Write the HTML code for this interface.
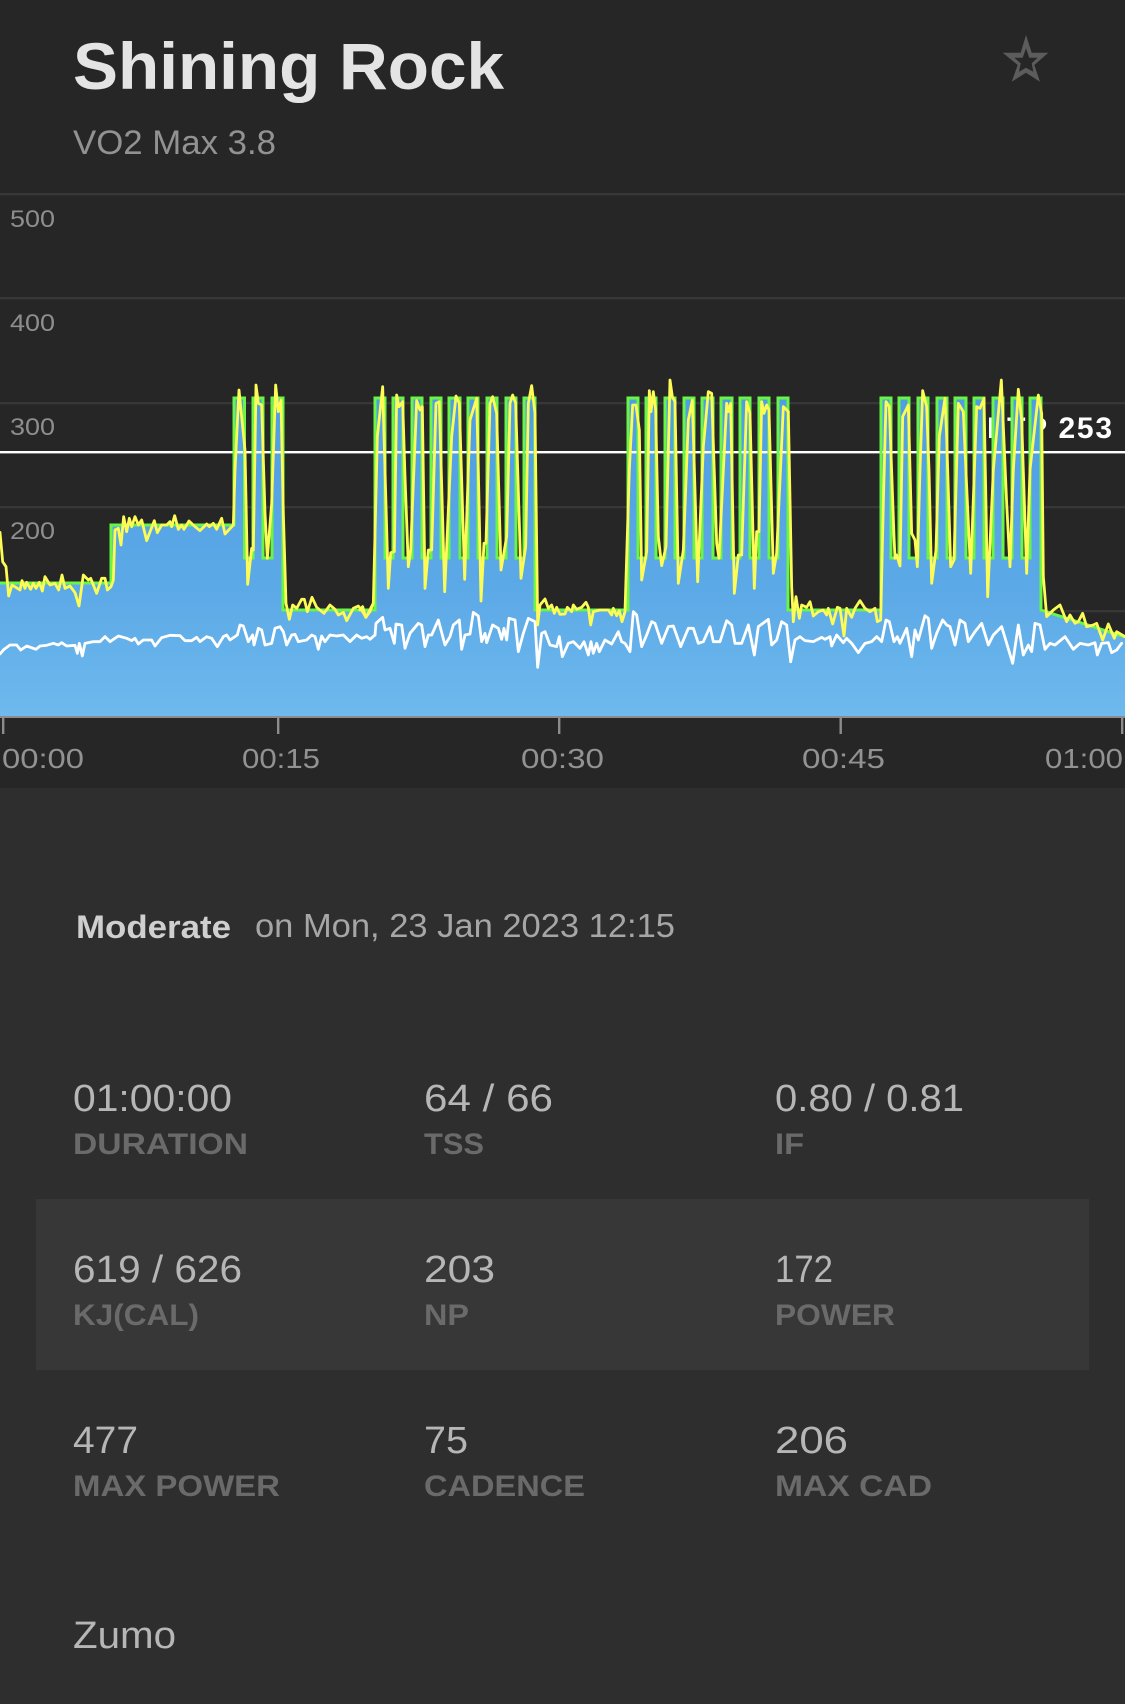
<!DOCTYPE html>
<html lang="en">
<head>
<meta charset="utf-8">
<title>Shining Rock</title>
<style>
html,body{margin:0;padding:0;background:#2e2e2e;width:1125px;height:1704px;overflow:hidden}
svg{display:block}
text{font-family:"Liberation Sans",sans-serif}
.v{font-size:38px;fill:#b6b6b6}
.l{font-size:30px;font-weight:700;fill:#6a6a6a}
.a{font-size:24px;fill:#8e8e8e}
.x{font-size:28px;fill:#929292}
</style>
</head>
<body>
<svg xmlns="http://www.w3.org/2000/svg" width="1125" height="1704" viewBox="0 0 1125 1704">
<defs>
<linearGradient id="bl" gradientUnits="userSpaceOnUse" x1="0" y1="398" x2="0" y2="717">
<stop offset="0" stop-color="#4f9ee4"/>
<stop offset="0.6" stop-color="#5ca9e7"/>
<stop offset="1" stop-color="#6eb9ed"/>
</linearGradient>
</defs>
<rect x="0" y="0" width="1125" height="1704" fill="#2e2e2e"/>
<rect x="0" y="0" width="1125" height="788" fill="#262626"/>

<text x="73" y="89" font-size="66" font-weight="700" fill="#e4e4e4" textLength="431" lengthAdjust="spacingAndGlyphs">Shining Rock</text>
<text x="73" y="154" font-size="34" fill="#929292" textLength="203" lengthAdjust="spacingAndGlyphs">VO2 Max 3.8</text>
<path fill-rule="evenodd" fill="#5c5c5c" d="M1026,35 L1031.7,52.7 L1048.3,52.7 L1034.3,65 L1040,81.7 L1026,72.7 L1011.7,81.7 L1017.7,65 L1002.7,52.7 L1020.7,52.7 Z M1026,48.3 L1029.3,57.7 L1037.7,57.7 L1031.7,63.3 L1033.3,71.7 L1026,67.7 L1019,71.7 L1020.7,63.3 L1014.3,57.7 L1022.7,57.7 Z"/>

<g fill="#373737">
<rect x="0" y="193" width="1125" height="2.4"/>
<rect x="0" y="297" width="1125" height="2.4"/>
<rect x="0" y="402" width="1125" height="2.4"/>
<rect x="0" y="506" width="1125" height="2.4"/>
<rect x="0" y="610" width="1125" height="2.4"/>
</g>
<text class="a" x="10" y="227" textLength="45" lengthAdjust="spacingAndGlyphs">500</text>
<text class="a" x="10" y="331" textLength="45" lengthAdjust="spacingAndGlyphs">400</text>
<text class="a" x="10" y="435" textLength="45" lengthAdjust="spacingAndGlyphs">300</text>
<text class="a" x="10" y="539" textLength="45" lengthAdjust="spacingAndGlyphs">200</text>

<text x="987" y="438" font-size="30" font-weight="700" fill="#ffffff" textLength="125" lengthAdjust="spacing">FTP 253</text>

<path fill="url(#bl)" d="M0,583 H111 V525 H234 V398 H244.5 V558 H253 V398 H263 V558 H272 V398 H283 V610 H375 V398 H385 V558 H393 V398 H403 V558 H412 V398 H422 V558 H431 V398 H441 V558 H449 V398 H460 V558 H468 V398 H478 V558 H487 V398 H497 V558 H506 V398 H516 V558 H524 V398 H535 V610 H628 V398 H638 V558 H646 V398 H656 V558 H665 V398 H675 V558 H684 V398 H694 V558 H702 V398 H713 V558 H721 V398 H732 V558 H740 V398 H750 V558 H759 V398 H769 V558 H778 V398 H788 V610 H881 V398 H891 V558 H899 V398 H909 V558 H918 V398 H928 V558 H937 V398 H947 V558 H955 V398 H966 V558 H974 V398 H984 V558 H993 V398 H1003 V558 H1012 V398 H1022 V558 H1030 V398 H1041 V610 L1125,637 V717 H0 Z"/>

<rect x="0" y="451" width="1125" height="2.4" fill="#ffffff"/>

<path fill="none" stroke="#69f545" stroke-width="3" stroke-linejoin="miter" d="M0,583 H111 V525 H234 V398 H244.5 V558 H253 V398 H263 V558 H272 V398 H283 V610 H375 V398 H385 V558 H393 V398 H403 V558 H412 V398 H422 V558 H431 V398 H441 V558 H449 V398 H460 V558 H468 V398 H478 V558 H487 V398 H497 V558 H506 V398 H516 V558 H524 V398 H535 V610 H628 V398 H638 V558 H646 V398 H656 V558 H665 V398 H675 V558 H684 V398 H694 V558 H702 V398 H713 V558 H721 V398 H732 V558 H740 V398 H750 V558 H759 V398 H769 V558 H778 V398 H788 V610 H881 V398 H891 V558 H899 V398 H909 V558 H918 V398 H928 V558 H937 V398 H947 V558 H955 V398 H966 V558 H974 V398 H984 V558 H993 V398 H1003 V558 H1012 V398 H1022 V558 H1030 V398 H1041 V610 L1125,637"/>

<!-- white cadence line -->
<g fill="none" stroke="#ffffff" stroke-width="8.4" stroke-linejoin="round" stroke-linecap="round">
<path transform="translate(0,370) scale(.33333)" d="M0,852 12,838 30,825 50,825 62,840 80,828 108,838 120,828 140,826 160,820 175,825 185,818 200,828 225,826 232,850 238,820 247,858 255,820 280,815 300,815 315,800 330,815 355,798 380,805 395,812 405,805 415,822 430,810 455,810 465,828 485,803 510,796 540,797 555,812 575,812 590,802 600,815 620,800 635,805 652,830 670,800 680,795 690,810 712,795 720,765 730,768 745,815 758,795 762,825 775,775 785,780 795,825 815,820 825,775 840,770 850,785 860,825 875,795 885,793 895,815 920,810 935,795 945,800 955,838 965,798 975,815 990,795 1010,798 1030,795 1050,815 1070,795 1085,805 1100,800 1110,808 1125,795"/>
<path transform="translate(360,370) scale(.33333)" d="M45,795 48,760 68,742 75,780 90,775 103,820 108,762 125,765 135,835 150,790 175,760 185,765 195,830 205,795 215,795 235,750 255,825 270,800 280,765 298,750 305,838 315,795 330,792 340,727 355,738 365,815 375,790 380,818 398,765 415,775 425,808 432,775 440,810 447,745 465,750 475,845 490,790 505,745 525,755 533,892 545,790 555,785 570,825 590,830 598,800 607,860 625,820 640,815 660,835 672,815 685,855 693,815 700,850 710,820 718,845 735,810 755,822 775,785 785,815 795,820 810,845 820,725 830,735 845,830 860,795 875,755 885,760 905,820 925,770 940,768 962,830 985,775 1000,775 1015,820 1030,815 1050,770 1060,815 1080,815 1100,752 1115,765 1125,820 1145,820 1165,765 1183,855 1195,770 1225,748 1235,825 1250,810 1265,755 1280,765 1292,875"/>
<path transform="translate(780,370) scale(.33333)" d="M32,875 45,810 60,800 75,812 100,815 125,802 135,808 150,800 155,828 170,795 190,818 200,805 215,820 235,848 255,820 275,815 290,800 305,815 318,750 328,755 342,815 352,800 360,820 380,775 395,860 405,780 415,810 435,737 445,745 455,835 470,790 488,750 500,765 510,770 525,825 540,750 555,760 565,815 585,785 605,760 625,825 640,795 665,770 680,820 698,880 715,765 730,855 745,825 755,845 765,760 780,765 795,838 810,820 825,825 855,800 880,838 900,820 925,825 945,818 952,855 965,820 985,818 995,848 1010,840 1025,820"/>
</g>

<!-- yellow power line -->
<g fill="none" stroke="#fdfb56" stroke-width="8.4" stroke-linejoin="round" stroke-linecap="round">
<path transform="translate(0,370) scale(.33333)" d="M0,487 8,575 18,590 26,678 36,645 60,660 66,632 75,655 80,637 92,658 100,640 108,655 118,637 127,663 135,620 150,645 165,640 176,660 186,615 195,655 210,648 225,668 237,708 250,615 265,630 272,625 290,670 305,625 315,625 322,660 333,650 340,630 345,480 355,475 363,525 371,440 380,485 388,445 395,470 405,440 415,465 425,450 440,512 463,452 472,488 485,465 500,465 510,455 515,470 524,437 535,478 545,465 552,478 567,453 585,470 600,482 620,462 628,470 640,460 650,478 665,445 675,492 700,465 705,300 717,60 735,240 743,643 755,535 760,540 768,45 775,100 785,105 795,430 802,565 815,400 827,45 835,125 843,90 850,430 858,700 868,748 878,705 890,715 905,688 913,688 922,725 936,682 950,712 972,730 990,705 1005,718 1015,735 1030,727 1040,752 1060,715 1075,708 1085,720 1098,742 1120,700"/>
<path transform="translate(360,370) scale(.33333)" d="M0,720 8,710 17,742 30,725 40,700 52,200 68,50 85,655 92,548 103,545 110,75 117,110 128,95 135,320 145,590 152,540 170,92 180,120 187,110 195,655 205,540 215,540 228,100 238,95 254,665 275,200 288,78 298,100 314,628 330,150 350,85 355,300 363,693 372,520 378,520 390,100 398,80 410,130 423,600 440,500 450,100 458,75 467,100 483,625 497,530 505,100 515,47 525,130 533,765 540,705 555,687 565,715 575,705 583,730 590,712 600,733 615,732 622,712 635,725 640,705 650,718 665,712 678,697 685,712 692,765 700,725 720,720 745,720 755,735 760,715 770,737 778,722 786,755 795,725 808,300 818,105 828,105 838,180 845,630 860,545 868,62 873,125 880,65 887,120 895,500 905,587 918,530 930,30 937,80 945,95 955,640 970,540 985,150 997,90 1013,635 1030,230 1045,65 1055,70 1070,520 1077,565 1100,100 1105,125 1112,100 1123,670 1135,555 1145,555 1160,95 1170,130 1183,655 1190,485 1197,485 1205,95 1212,130 1220,105 1227,120 1240,610 1250,550 1270,110 1285,125"/>
<path transform="translate(780,370) scale(.33333)" d="M25,125 35,650 40,755 48,680 58,745 65,705 80,712 90,695 100,738 115,725 130,720 140,735 145,715 158,762 172,712 180,715 192,798 200,715 215,742 225,715 240,692 255,715 270,725 285,715 292,755 302,750 310,400 318,95 328,110 342,500 345,565 350,555 360,588 368,140 385,105 395,490 405,510 412,590 420,300 428,62 440,110 447,300 455,640 468,540 478,200 495,85 500,200 512,590 522,570 535,100 550,125 560,350 572,610 590,110 600,115 612,85 623,680 640,300 664,30 680,400 690,590 700,300 715,58 725,150 740,610 750,300 775,75 785,130 790,620 800,740 820,720 840,705 860,755 870,735 885,760 895,755 908,730 920,770 940,765 950,760 968,810 985,762 1003,805 1010,785 1035,800"/>
</g>

<rect x="0" y="716" width="1125" height="2" fill="#8c8c8c"/>
<g fill="#8c8c8c">
<rect x="2" y="717" width="2.4" height="17"/>
<rect x="277" y="717" width="2.4" height="17"/>
<rect x="558" y="717" width="2.4" height="17"/>
<rect x="839.5" y="717" width="2.4" height="17"/>
<rect x="1121" y="717" width="2.4" height="17"/>
</g>
<text class="x" x="2" y="768" textLength="82" lengthAdjust="spacingAndGlyphs">00:00</text>
<text class="x" x="242" y="768" textLength="78" lengthAdjust="spacingAndGlyphs">00:15</text>
<text class="x" x="521" y="768" textLength="83" lengthAdjust="spacingAndGlyphs">00:30</text>
<text class="x" x="802" y="768" textLength="83" lengthAdjust="spacingAndGlyphs">00:45</text>
<text class="x" x="1045" y="768" textLength="78" lengthAdjust="spacingAndGlyphs">01:00</text>

<text x="76" y="938" font-size="32" font-weight="700" fill="#cfcfcf" textLength="155" lengthAdjust="spacingAndGlyphs">Moderate</text>
<text x="255" y="937" font-size="33" fill="#a6a6a6" textLength="420" lengthAdjust="spacingAndGlyphs">on Mon, 23 Jan 2023 12:15</text>

<rect x="36" y="1199" width="1053" height="171" fill="#373737"/>

<text class="v" x="73" y="1111" textLength="159" lengthAdjust="spacingAndGlyphs">01:00:00</text>
<text class="l" x="73" y="1154" textLength="175" lengthAdjust="spacingAndGlyphs">DURATION</text>
<text class="v" x="424" y="1111" textLength="129" lengthAdjust="spacingAndGlyphs">64 / 66</text>
<text class="l" x="424" y="1154" textLength="60" lengthAdjust="spacingAndGlyphs">TSS</text>
<text class="v" x="775" y="1111" textLength="189" lengthAdjust="spacingAndGlyphs">0.80 / 0.81</text>
<text class="l" x="775" y="1154" textLength="29" lengthAdjust="spacingAndGlyphs">IF</text>

<text class="v" x="73" y="1282" textLength="169" lengthAdjust="spacingAndGlyphs">619 / 626</text>
<text class="l" x="73" y="1325" textLength="126" lengthAdjust="spacingAndGlyphs">KJ(CAL)</text>
<text class="v" x="424" y="1282" textLength="71" lengthAdjust="spacingAndGlyphs">203</text>
<text class="l" x="424" y="1325" textLength="45" lengthAdjust="spacingAndGlyphs">NP</text>
<text class="v" x="775" y="1282" textLength="58" lengthAdjust="spacingAndGlyphs">172</text>
<text class="l" x="775" y="1325" textLength="120" lengthAdjust="spacingAndGlyphs">POWER</text>

<text class="v" x="73" y="1453" textLength="65" lengthAdjust="spacingAndGlyphs">477</text>
<text class="l" x="73" y="1496" textLength="207" lengthAdjust="spacingAndGlyphs">MAX POWER</text>
<text class="v" x="424" y="1453" textLength="44" lengthAdjust="spacingAndGlyphs">75</text>
<text class="l" x="424" y="1496" textLength="161" lengthAdjust="spacingAndGlyphs">CADENCE</text>
<text class="v" x="775" y="1453" textLength="73" lengthAdjust="spacingAndGlyphs">206</text>
<text class="l" x="775" y="1496" textLength="157" lengthAdjust="spacingAndGlyphs">MAX CAD</text>

<text class="v" x="73" y="1648" textLength="103" lengthAdjust="spacingAndGlyphs">Zumo</text>
</svg>
</body>
</html>
